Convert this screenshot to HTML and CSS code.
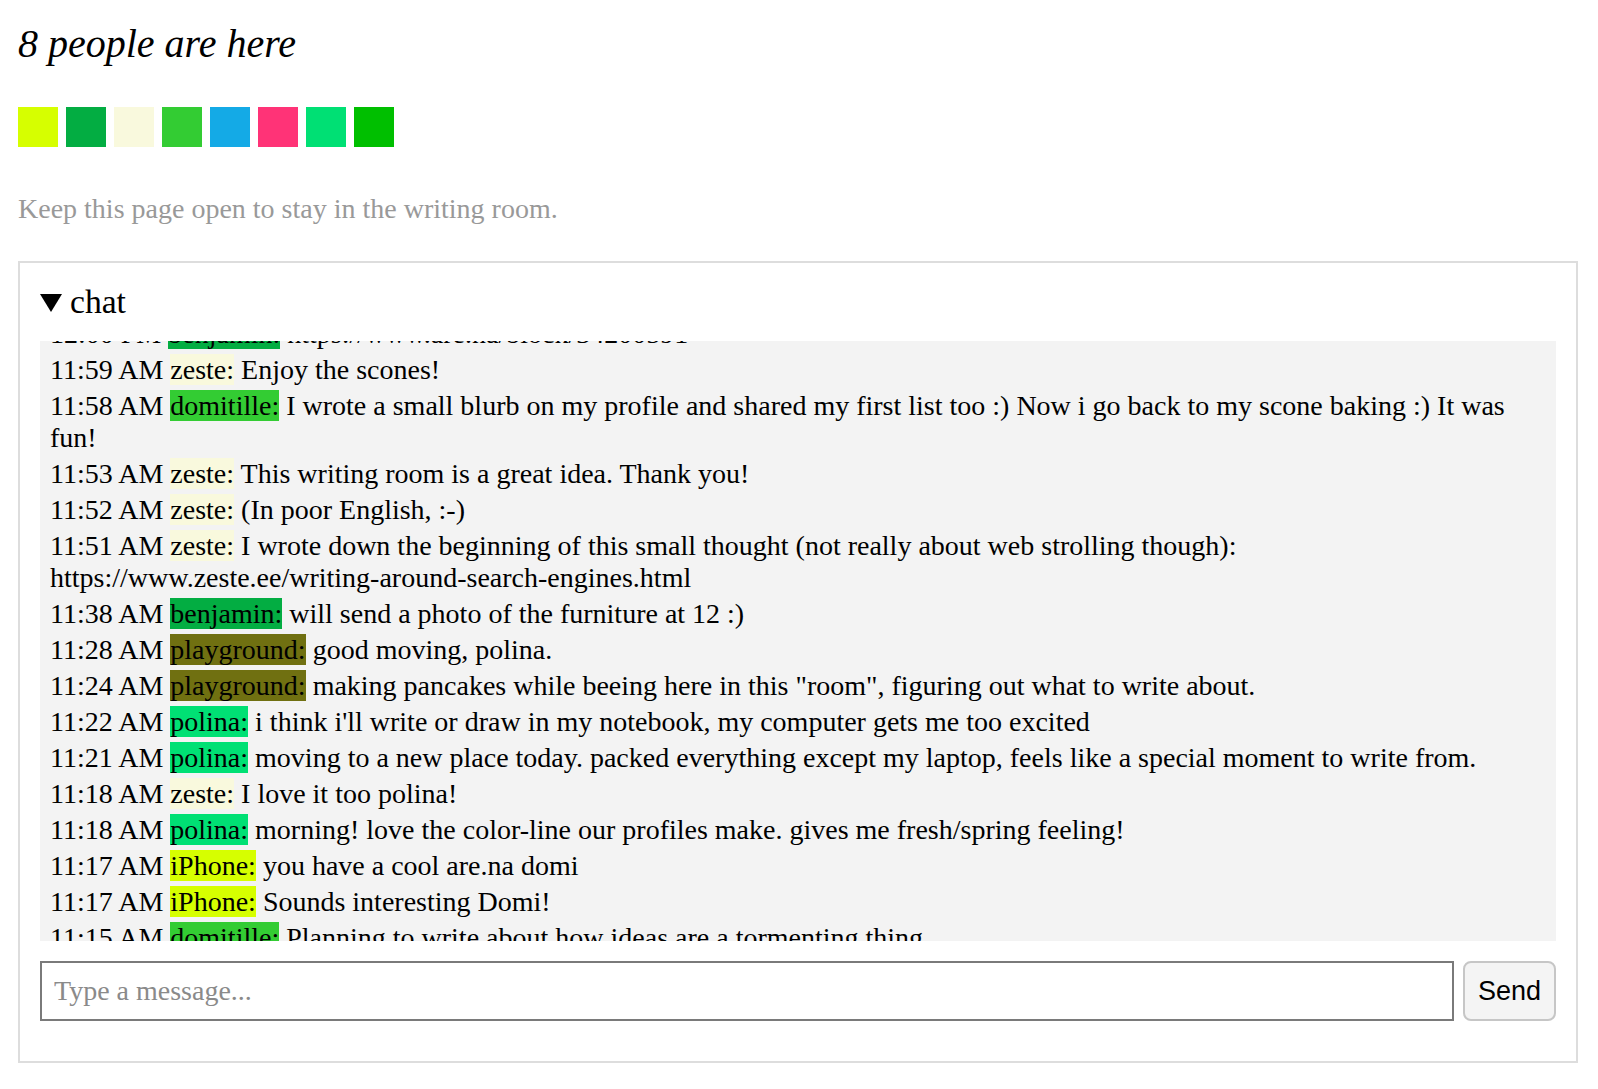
FILE: index.html
```html
<!DOCTYPE html>
<html lang="en">
<head>
    <meta charset="UTF-8">
    <meta name="viewport" content="width=device-width, initial-scale=1.0">
    <title>Writing Room</title>
    <link rel="stylesheet" href="styles.css">
</head>
<body>
    <h1 class="count">8 people are here</h1>

    <div class="people">
        <span class="dot c-iphone"></span>
        <span class="dot c-benjamin"></span>
        <span class="dot c-zeste"></span>
        <span class="dot c-domitille"></span>
        <span class="dot c-blue"></span>
        <span class="dot c-pink"></span>
        <span class="dot c-polina"></span>
        <span class="dot c-green"></span>
    </div>

    <p class="note">Keep this page open to stay in the writing room.</p>

    <details class="chat" open>
        <summary>chat</summary>
        <ul id="messages" class="log">
            <li>12:00 PM <span class="name c-benjamin">benjamin:</span> https://www.are.na/block/34200591</li>
            <li>11:59 AM <span class="name c-zeste">zeste:</span> Enjoy the scones!</li>
            <li>11:58 AM <span class="name c-domitille">domitille:</span> I wrote a small blurb on my profile and shared my first list too :) Now i go back to my scone baking :) It was fun!</li>
            <li>11:53 AM <span class="name c-zeste">zeste:</span> This writing room is a great idea. Thank you!</li>
            <li>11:52 AM <span class="name c-zeste">zeste:</span> (In poor English, :-)</li>
            <li>11:51 AM <span class="name c-zeste">zeste:</span> I wrote down the beginning of this small thought (not really about web strolling though): https://www.zeste.ee/writing-around-search-engines.html</li>
            <li>11:38 AM <span class="name c-benjamin">benjamin:</span> will send a photo of the furniture at 12 :)</li>
            <li>11:28 AM <span class="name c-playground">playground:</span> good moving, polina.</li>
            <li>11:24 AM <span class="name c-playground">playground:</span> making pancakes while beeing here in this "room", figuring out what to write about.</li>
            <li>11:22 AM <span class="name c-polina">polina:</span> i think i'll write or draw in my notebook, my computer gets me too excited</li>
            <li>11:21 AM <span class="name c-polina">polina:</span> moving to a new place today. packed everything except my laptop, feels like a special moment to write from.</li>
            <li>11:18 AM <span class="name c-zeste">zeste:</span> I love it too polina!</li>
            <li>11:18 AM <span class="name c-polina">polina:</span> morning! love the color-line our profiles make. gives me fresh/spring feeling!</li>
            <li>11:17 AM <span class="name c-iphone">iPhone:</span> you have a cool are.na domi</li>
            <li>11:17 AM <span class="name c-iphone">iPhone:</span> Sounds interesting Domi!</li>
            <li>11:15 AM <span class="name c-domitille">domitille:</span> Planning to write about how ideas are a tormenting thing</li>
        </ul>

        <form id="form" class="send" action="">
            <input id="input" autocomplete="off" placeholder="Type a message..." />
            <button>Send</button>
        </form>
    </details>

    <script>
        const messages = document.getElementById('messages');
        messages.scrollTop = 35;

        document.getElementById('form').addEventListener('submit', function(e) {
            e.preventDefault();
        });
    </script>
</body>
</html>
```

FILE: styles.css
```css
body {
    font-family: "Liberation Serif", "Times New Roman", serif;
    font-size: 28px;
    margin: 0;
    padding: 20px 20px 20px 18px;
    background: #fff;
    color: #000;
}
.count {
    font-size: 40px;
    font-style: italic;
    font-weight: normal;
    margin: 0 0 40px;
}
.people {
    display: flex;
    gap: 8px;
    margin-bottom: 46px;
}
.dot {
    width: 40px;
    height: 40px;
}
.note {
    color: #999;
    margin: 0 0 36px;
}
.chat {
    border: 2px solid #ddd;
    padding: 20px;
}
.chat summary {
    font-size: 33.6px;
    list-style: none;
    cursor: pointer;
}
.chat summary::-webkit-details-marker {
    display: none;
}
.chat summary::before {
    content: "";
    display: inline-block;
    border-left: 11px solid transparent;
    border-right: 11px solid transparent;
    border-top: 18px solid #000;
    margin-right: 8px;
    vertical-align: 1px;
}
.log {
    list-style-type: none;
    margin: 20px 0 0;
    padding: 10px;
    height: 600px;
    box-sizing: border-box;
    overflow: hidden;
    background: #f3f3f3;
}
.log li {
    padding: 2px 0;
}
.send {
    display: flex;
    gap: 9px;
    margin: 20px 0;
}
.send input {
    flex: 1;
    font: inherit;
    padding: 12px;
    border: 2px solid #7a7a7a;
    border-radius: 0;
    outline: none;
}
.send input::placeholder {
    color: #8a8a8a;
}
.send button {
    font-family: "Liberation Sans", Arial, sans-serif;
    font-size: 27px;
    padding: 0 13px;
    border: 2px solid #c6c6c6;
    border-radius: 8px;
    background: #f4f4f4;
    color: #000;
    cursor: pointer;
}

/* person colours */
.c-iphone { background: #d6ff00; }
.c-benjamin { background: #03ad42; }
.c-zeste { background: #f9f9dd; }
.c-domitille { background: #33cc33; }
.c-blue { background: #14aae6; }
.c-pink { background: #ff3377; }
.c-polina { background: #00e074; }
.c-green { background: #00bf00; }
.c-playground { background: #707011; }
```
